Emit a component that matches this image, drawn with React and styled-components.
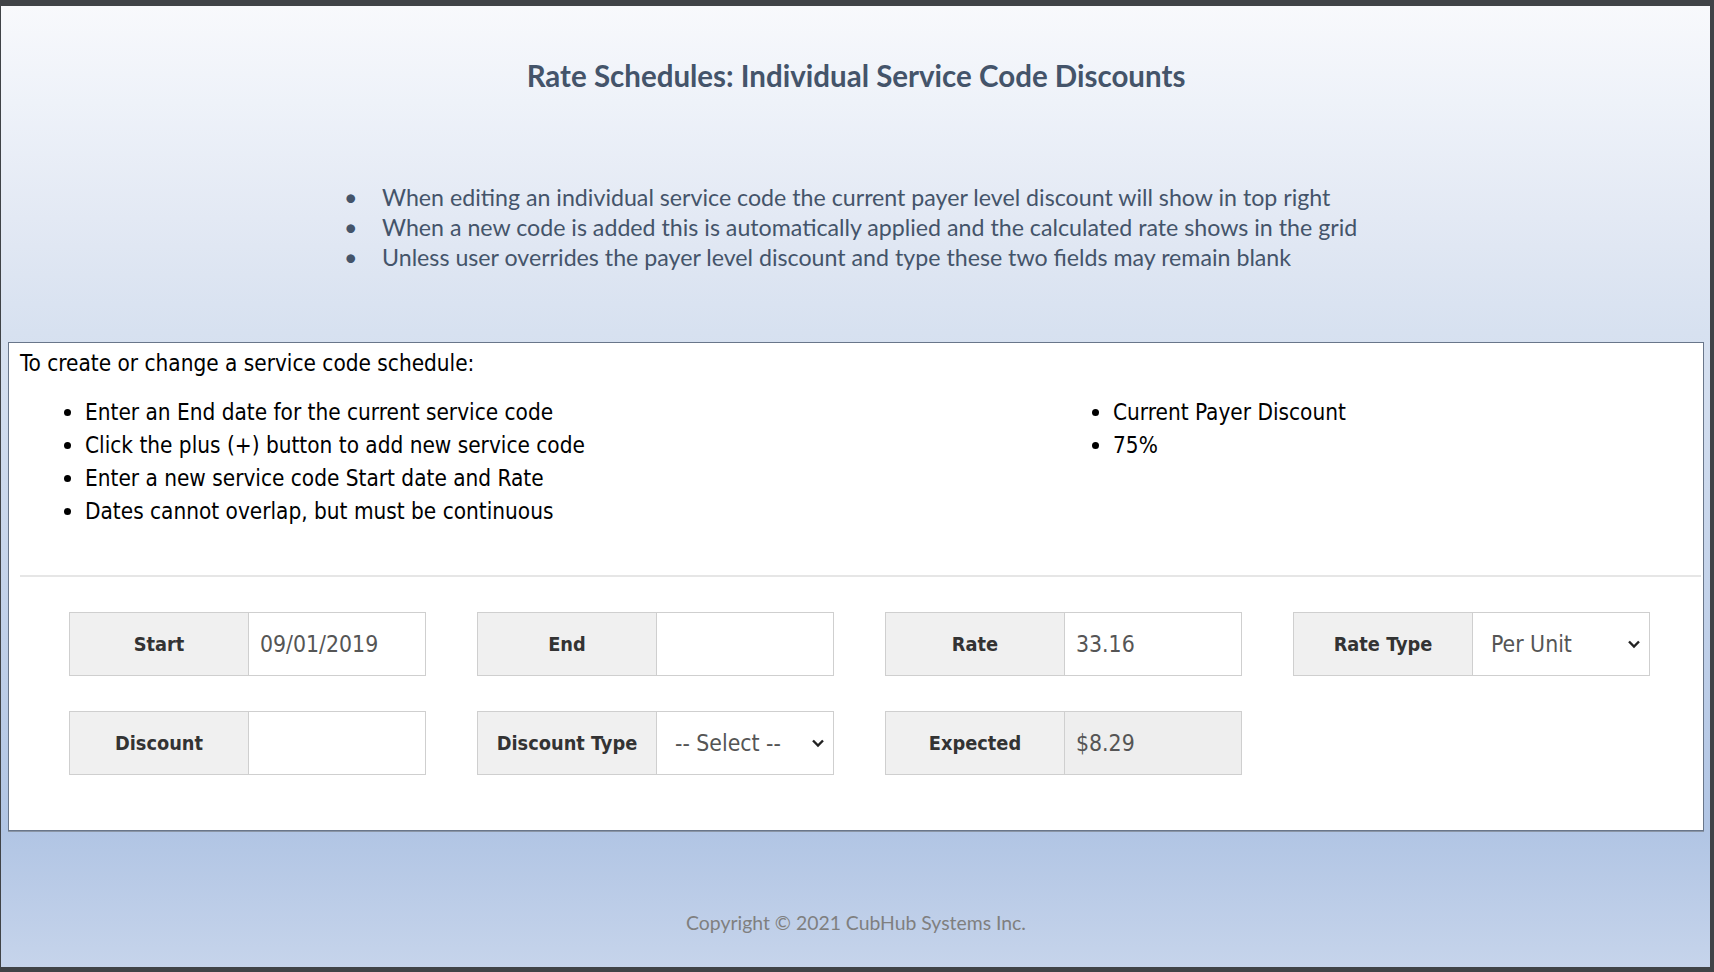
import styled, { createGlobalStyle } from "styled-components";

const Global = createGlobalStyle`
  html, body { margin: 0; padding: 0; }
  body {
    background: #404347;
    width: 1714px;
    height: 972px;
    overflow: hidden;
  }
`

const Slide = styled.div`
  margin: 6px 4px 5px 1px;
  height: 961px;
  box-sizing: border-box;
  background: linear-gradient(180deg, #f8f9fc 0%, #eef2f9 10%, #e3e9f4 22%, #d7e1f0 34%, #b1c5e4 86%, #c6d4eb 100%);
  display: flex;
  flex-direction: column;
  padding: 0 6px 0 7px;
`

const Title = styled.h1`
  margin: 53px 0 0 0;
  text-align: center;
  font-family: Lato, "Open Sans", sans-serif;
  font-weight: 700;
  font-size: 29.5px;
  line-height: 34px;
  color: #44546a;
`

const Notes = styled.ul`
  margin: 89px 0 0 0;
  padding: 0 0 0 374px;
  list-style: none;
  font-family: Lato, "Open Sans", sans-serif;
  font-size: 23.2px;
  line-height: 30px;
  color: #44546a;
`

const Note = styled.li`
  position: relative;
  &::before {
    content: "•";
    position: absolute;
    left: -38px;
    color: #44546a;
  }
`

const Card = styled.section`
  margin-top: 70px;
  height: 489px;
  box-sizing: border-box;
  background: #fff;
  border: 1px solid #69768a;
  box-shadow: 0 1px 0 #8a95a5;
  padding: 6px 0 0 11px;
  font-family: "DejaVu Sans Condensed", "DejaVu Sans", sans-serif;
  font-stretch: condensed;
  color: #000;
`

const Intro = styled.p`
  margin: 0;
  font-size: 22.4px;
  line-height: 28px;
`

const Columns = styled.div`
  display: grid;
  grid-template-columns: 1028px 1fr;
  margin-top: 19px;
`

const Steps = styled.ul`
  margin: 0;
  padding-left: 65px;
  font-size: 22.4px;
  line-height: 33px;
  list-style: disc;
`

const Divider = styled.hr`
  margin: 47px 2px 0 0;
  border: 0;
  border-top: 2px solid #e6e6e6;
`

const Form = styled.div`
  display: grid;
  grid-template-columns: repeat(4, 357px);
  column-gap: 51px;
  row-gap: 35px;
  margin-top: 35px;
  padding-left: 49px;
`

const Field = styled.div`
  display: grid;
  grid-template-columns: 179px 1fr;
  height: 64px;
  border: 1px solid #cfcfcf;
  box-sizing: border-box;
`

const Label = styled.div`
  display: flex;
  align-items: center;
  justify-content: center;
  background: #f0f0f0;
  border-right: 1px solid #cfcfcf;
  font-weight: 700;
  font-size: 19.8px;
  color: #333;
`

const Value = styled.div`
  display: flex;
  align-items: center;
  justify-content: space-between;
  padding: ${(p) => (p.$select ? "0 8px 0 18px" : "0 12px 0 11px")};
  background: ${(p) => (p.$readonly ? "#eeeeee" : "#fff")};
  font-size: 22.8px;
  color: #555;
`

const Chevron = styled.svg`
  width: 14px;
  height: 14px;
  flex: none;
`

const Footer = styled.footer`
  margin-top: 80px;
  text-align: center;
  font-family: Lato, "Open Sans", sans-serif;
  font-size: 19.4px;
  color: #7f7f7f;
`

function Select({ children }) {
  return (
    <Value $select>
      <span>{children}</span>
      <Chevron viewBox="0 0 14 14">
        <path d="M2 4.5 L7 9.5 L12 4.5" fill="none" stroke="#222" strokeWidth="2.4" />
      </Chevron>
    </Value>
  );
}

export default function App() {
  return (
    <>
      <Global />
      <Slide>
        <Title>Rate Schedules: Individual Service Code Discounts</Title>
        <Notes>
          <Note>When editing an individual service code the current payer level discount will show in top right</Note>
          <Note>When a new code is added this is automatically applied and the calculated rate shows in the grid</Note>
          <Note>Unless user overrides the payer level discount and type these two fields may remain blank</Note>
        </Notes>
        <Card>
          <Intro>To create or change a service code schedule:</Intro>
          <Columns>
            <Steps>
              <li>Enter an End date for the current service code</li>
              <li>Click the plus (+) button to add new service code</li>
              <li>Enter a new service code Start date and Rate</li>
              <li>Dates cannot overlap, but must be continuous</li>
            </Steps>
            <Steps>
              <li>Current Payer Discount</li>
              <li>75%</li>
            </Steps>
          </Columns>
          <Divider />
          <Form>
            <Field>
              <Label>Start</Label>
              <Value>09/01/2019</Value>
            </Field>
            <Field>
              <Label>End</Label>
              <Value />
            </Field>
            <Field>
              <Label>Rate</Label>
              <Value>33.16</Value>
            </Field>
            <Field>
              <Label>Rate Type</Label>
              <Select>Per Unit</Select>
            </Field>
            <Field>
              <Label>Discount</Label>
              <Value />
            </Field>
            <Field>
              <Label>Discount Type</Label>
              <Select>-- Select --</Select>
            </Field>
            <Field>
              <Label>Expected</Label>
              <Value $readonly>$8.29</Value>
            </Field>
          </Form>
        </Card>
        <Footer>Copyright © 2021 CubHub Systems Inc.</Footer>
      </Slide>
    </>
  );
}
